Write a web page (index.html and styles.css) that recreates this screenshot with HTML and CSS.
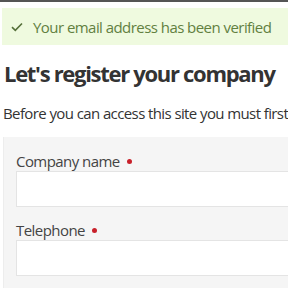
FILE: index.html
```html
<!DOCTYPE html>
<html>
<head>
<meta charset="utf-8">
<link rel="stylesheet" href="styles.css">
</head>
<body>
<div class="topbar"></div>
<main class="content">
  <div class="alert">
    <svg class="check" width="12" height="10" viewBox="0 0 12 10"><path d="M1 5.2 L4.3 8.3 L11 1.5" fill="none" stroke="#55703a" stroke-width="1.6"/></svg>
    <span>Your email address has been verified</span>
  </div>
  <h1 class="title">Let's register your company</h1>
  <p class="intro">Before you can access this site you must first register your company</p>
  <form class="panel">
    <div class="field">
      <label class="label">Company name <span class="req"></span></label>
      <input class="input" type="text">
    </div>
    <div class="field">
      <label class="label">Telephone <span class="req"></span></label>
      <input class="input" type="text">
    </div>
  </form>
</main>
</body>
</html>
```
FILE: styles.css
```css
html, body { margin: 0; padding: 0; background: #fff; }
body { font-family: "Open Sans", sans-serif; color: #333; width: 288px; overflow: hidden; }
.topbar { height: 2px; background: #555; }
.content { padding: 6px 0 0 2px; overflow: hidden; }
.alert {
  display: flex; align-items: center; gap: 10px;
  height: 37px; padding-left: 9px;
  background: #effadf; color: #62803f;
  font-size: 15px; letter-spacing: -0.55px; white-space: nowrap;
}
.check { flex: none; }
.title { margin: 12px 0 0 2px; font-size: 22px; letter-spacing: -1.3px; font-weight: 700; line-height: 32px; color: #333; white-space: nowrap; }
.intro { margin: 14px 0 0 1px; font-size: 15px; letter-spacing: -0.6px; line-height: 20px; white-space: nowrap; color: #333; }
.panel { margin: 14px 0 0 1px; background: #f5f5f5; padding: 14px 0 20px 12px; width: 400px; border-left: 1px solid #ededed; }
.field { display: flex; flex-direction: column; }
.field + .field { margin-top: 13px; }
.label { font-size: 15px; letter-spacing: -0.55px; line-height: 20px; color: #444; display: flex; align-items: center; gap: 7px; margin-bottom: 0; }
.req { width: 5px; height: 5px; border-radius: 50%; background: #c8202a; display: inline-block; }
.input { height: 36px; box-sizing: border-box; border: 1px solid #e4e4e4; background: #fff; width: 400px; margin: 0; padding: 0; }
```
